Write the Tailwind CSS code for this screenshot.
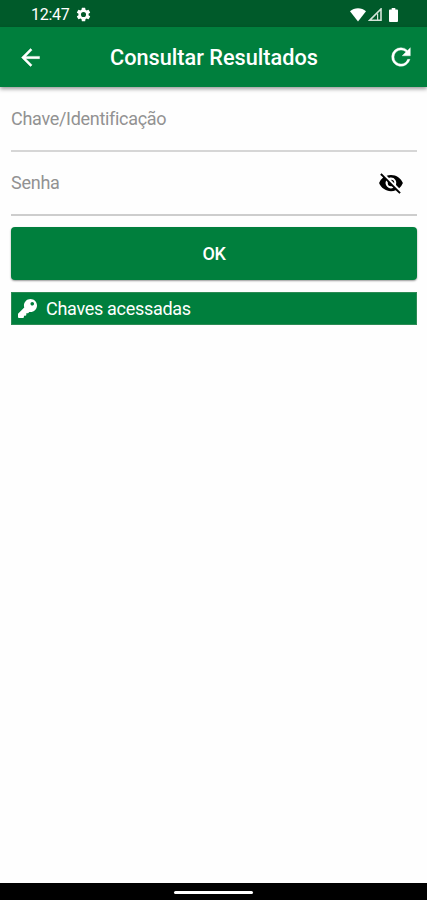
<!DOCTYPE html>
<html lang="pt-BR">
<head>
  <meta charset="UTF-8" />
  <meta name="viewport" content="width=device-width, initial-scale=1.0" />
  <title>Consultar Resultados</title>
  <script src="https://cdn.jsdelivr.net/npm/@tailwindcss/browser@4"></script>
</head>
<body class="bg-[#fefefe] font-[Roboto,sans-serif]">
  <div class="flex flex-col h-screen overflow-hidden">

    <!-- status bar -->
    <div class="h-[27px] shrink-0 bg-[#005a2a] text-white flex items-center justify-between pl-[31px] pr-[29px] pt-[2px]">
      <div class="flex items-center gap-[5px]">
        <span class="text-[16px] tracking-[-0.3px] leading-none w-[39px] whitespace-nowrap">12:47</span>
        <svg class="size-[17px]" viewBox="0 0 24 24" fill="currentColor"><path d="M19.14 12.94c.04-.3.06-.61.06-.94s-.02-.64-.07-.94l2.03-1.58a.49.49 0 0 0 .12-.61l-1.92-3.32a.49.49 0 0 0-.59-.22l-2.39.96a7 7 0 0 0-1.62-.94l-.36-2.54a.48.48 0 0 0-.48-.41h-3.84a.47.47 0 0 0-.47.41l-.36 2.54c-.59.24-1.13.57-1.62.94l-2.39-.96a.48.48 0 0 0-.59.22L2.74 8.87a.47.47 0 0 0 .12.61l2.03 1.58a7 7 0 0 0 0 1.88l-2.03 1.58a.49.49 0 0 0-.12.61l1.92 3.32c.12.22.37.29.59.22l2.39-.96c.5.38 1.03.7 1.62.94l.36 2.54c.05.24.24.41.48.41h3.84c.24 0 .44-.17.47-.41l.36-2.54c.59-.24 1.13-.56 1.62-.94l2.39.96c.22.08.47 0 .59-.22l1.92-3.32a.47.47 0 0 0-.12-.61zM12 15.6a3.6 3.6 0 1 1 0-7.2 3.6 3.6 0 0 1 0 7.2z"/></svg>
      </div>
      <div class="flex items-center">
        <svg class="w-[16px] h-[14px]" viewBox="0 0 16 14" fill="currentColor"><path d="M8 13.500 0 3.300C2.200 1.200 5 .2 8 .2s5.800 1 8 3.100z"/></svg>
        <svg class="ml-[2px] w-[14px] h-[14px]" viewBox="0 0 14 14" fill="none" stroke="#d5e5da" stroke-width="1.600"><path d="M1.800 12.200H13V1z"/><path d="M9.600 5.500v7" stroke-width="1.200"/></svg>
        <svg class="ml-[7px] w-[9px] h-[14px]" viewBox="0 0 10 15" preserveAspectRatio="none" fill="currentColor"><path d="M3 0h4v1.500h1.800c.7 0 1.200.5 1.200 1.200v11c0 .8-.5 1.300-1.200 1.300H1.200C.5 15 0 14.500 0 13.700v-11c0-.7.5-1.200 1.200-1.200H3z"/></svg>
      </div>
    </div>

    <!-- toolbar -->
    <header class="h-[60px] shrink-0 bg-[#007f3d] text-white flex items-center justify-between pl-[17px] pr-[12px] shadow-[0_2px_4px_rgba(0,0,0,0.4)]">
      <button aria-label="Voltar">
        <svg class="size-[27px]" viewBox="0 0 24 24" fill="currentColor"><path d="M20 11H7.830l5.590-5.590L12 4l-8 8 8 8 1.410-1.410L7.830 13H20z" stroke="currentColor" stroke-width=".4"/></svg>
      </button>
      <h1 class="text-[21.700px] font-medium leading-none w-[211px] whitespace-nowrap pt-[2px]">Consultar Resultados</h1>
      <button aria-label="Atualizar">
        <svg class="size-[28px]" viewBox="0 0 24 24" fill="currentColor"><path d="M17.650 6.350A7.958 7.958 0 0 0 12 4a8 8 0 1 0 7.730 10h-2.080A5.990 5.990 0 0 1 12 18a6 6 0 1 1 0-12c1.660 0 3.140.69 4.220 1.780L13 11h7V4z" stroke="currentColor" stroke-width=".3"/></svg>
      </button>
    </header>

    <main class="flex-1 pl-[11px] pr-[10px]">
      <div class="h-[65px] border-b-2 border-[#d6d6d6] flex items-center text-[18px] tracking-[-0.3px] text-[#929292]">
        <span>Chave/Identificação</span>
      </div>
      <div class="h-[64px] border-b-2 border-[#cdcdcd] flex items-center justify-between text-[18px] tracking-[-0.25px] text-[#929292] pr-[13px]">
        <span class="pb-[2px]">Senha</span>
        <svg class="size-[26px]" viewBox="0 0 24 24" fill="#000"><path d="M12 7a5 5 0 0 1 4.640 6.830l2.920 2.920A11.820 11.820 0 0 0 22.990 12C21.260 7.610 16.990 4.500 11.990 4.500c-1.400 0-2.740.25-3.980.7l2.160 2.160C10.740 7.130 11.350 7 12 7zM2 4.270l2.280 2.280.46.46A11.804 11.804 0 0 0 1 12c1.730 4.390 6 7.500 11 7.500 1.550 0 3.030-.3 4.380-.84l.42.42L19.730 22 21 20.730 3.270 3zM7.530 9.800l1.550 1.550A2.820 2.820 0 0 0 9 12a3 3 0 0 0 3 3c.22 0 .44-.03.65-.08l1.550 1.550A5 5 0 0 1 7.530 9.800zm4.310-.78 3.150 3.150.02-.16a3 3 0 0 0-3-3z"/></svg>
      </div>
      <button class="mt-[11px] h-[53px] w-full rounded-[4px] bg-[#007f3d] text-white text-[18px] tracking-[-0.3px] font-medium shadow-[0_1px_2px_rgba(0,0,0,0.4)]">OK</button>
      <div class="mt-[12px] h-[33px] bg-[#007f3d] border border-[#2c8b55] text-white flex items-center gap-[9px] pl-[6px] text-[18px] tracking-[-0.3px]">
        <svg class="size-[19px]" viewBox="0 0 512 512" fill="currentColor"><path d="M512 176.001C512 273.203 433.202 352 336 352c-11.220 0-22.190-1.062-32.827-3.069l-24.012 27.014A23.999 23.999 0 0 1 261.223 384H224v40c0 13.255-10.745 24-24 24h-40v40c0 13.255-10.745 24-24 24H24c-13.255 0-24-10.745-24-24v-78.059c0-6.365 2.529-12.470 7.029-16.971l161.802-161.802C163.108 213.814 160 195.271 160 176 160 78.798 238.797.001 335.999 0 433.488-.001 512 78.511 512 176.001zM336 128c0 26.510 21.490 48 48 48s48-21.490 48-48-21.490-48-48-48-48 21.490-48 48z"/></svg>
        <span>Chaves acessadas</span>
      </div>
    </main>

    <!-- gesture bar -->
    <div class="h-[17px] shrink-0 bg-black flex items-center justify-center pt-[2px]">
      <div class="w-[79px] h-[3px] rounded-full bg-white"></div>
    </div>
  </div>
</body>
</html>
